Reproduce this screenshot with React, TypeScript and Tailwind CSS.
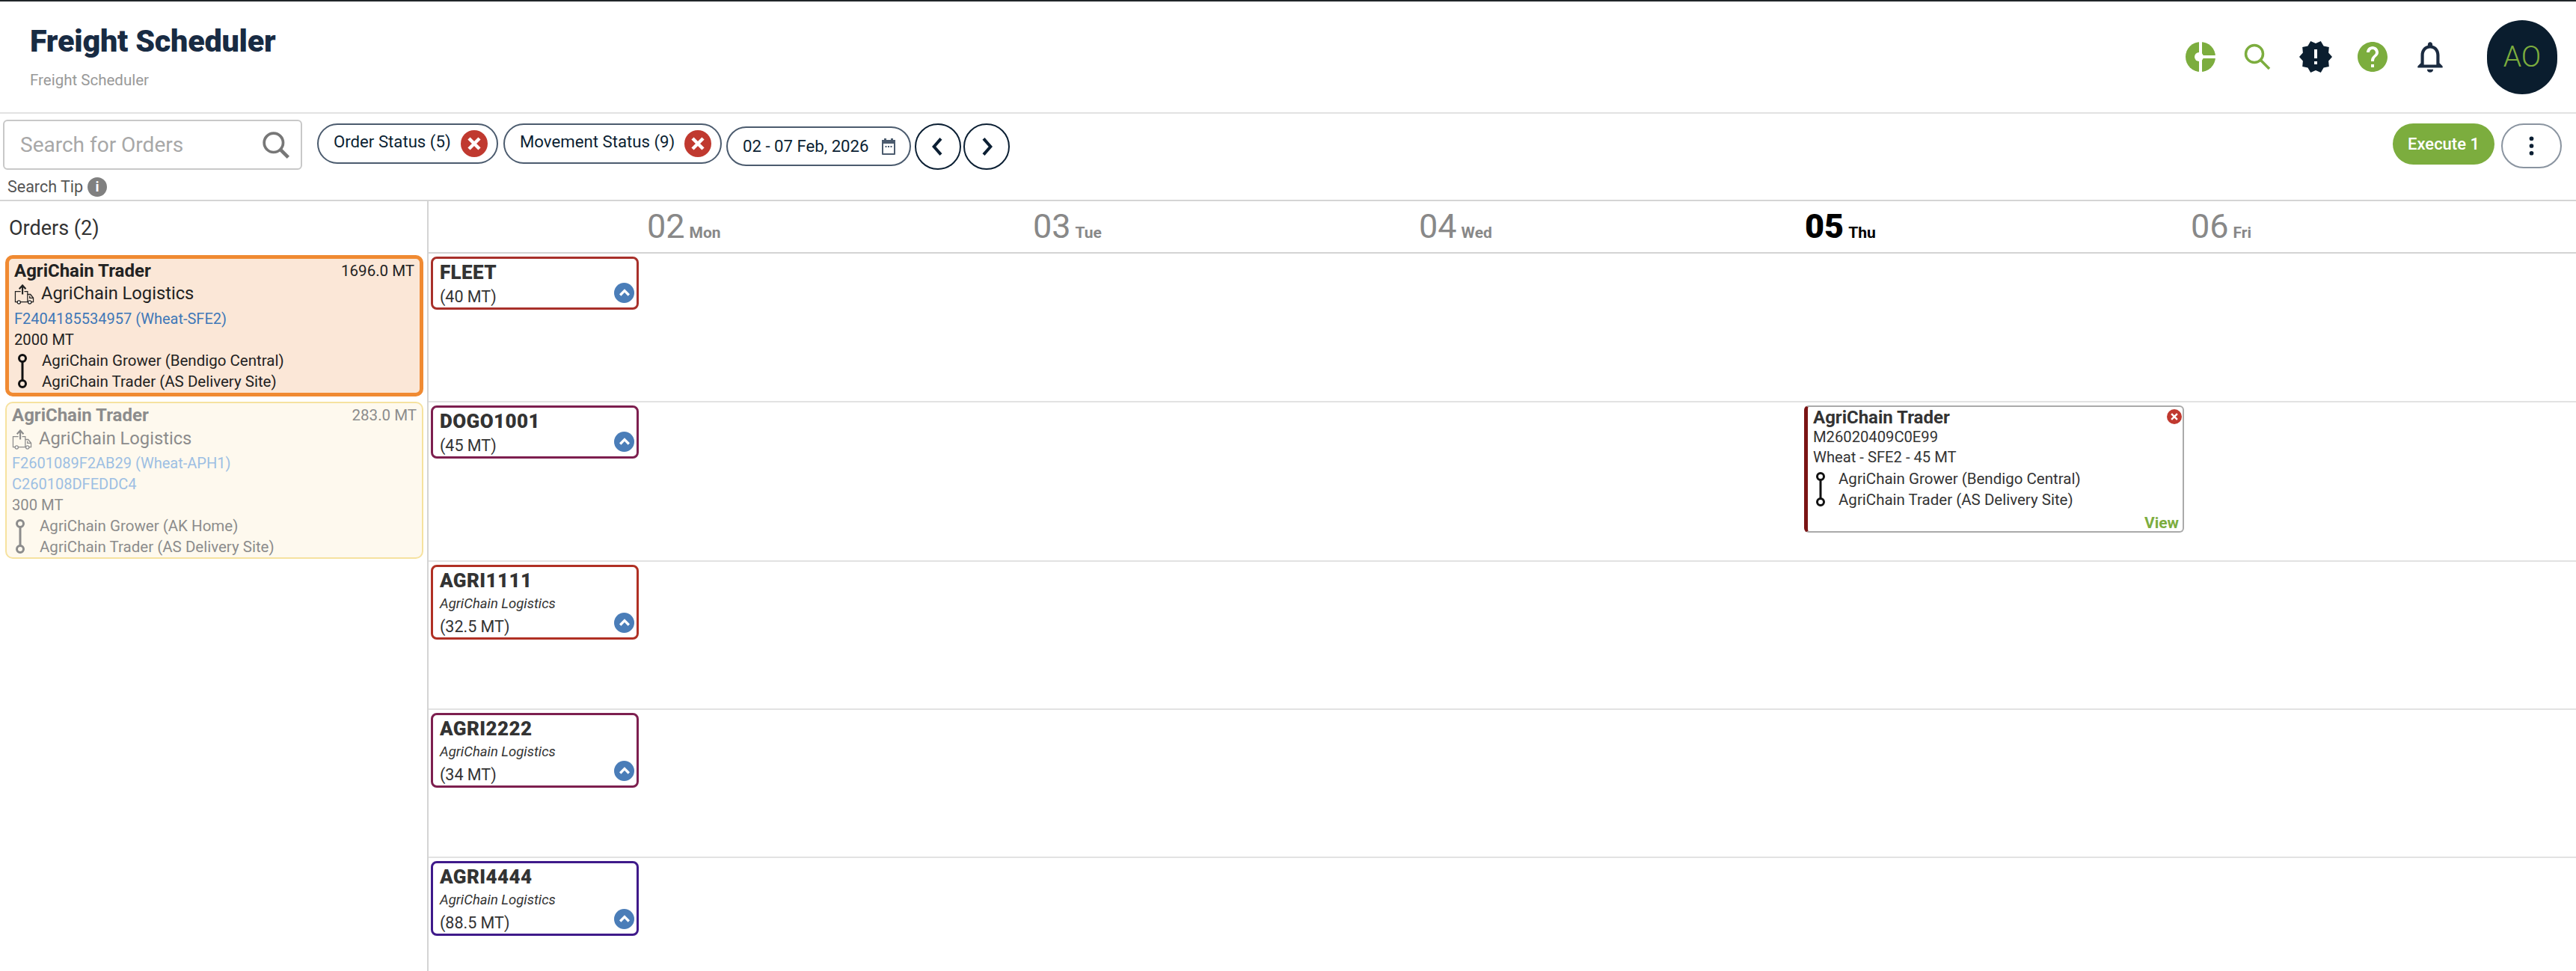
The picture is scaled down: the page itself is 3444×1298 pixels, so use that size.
import { MdHelp, MdNewReleases, MdOutlineNotifications } from 'react-icons/md'

const days = [
  { num: '02', name: 'Mon' },
  { num: '03', name: 'Tue' },
  { num: '04', name: 'Wed' },
  { num: '05', name: 'Thu', today: true },
  { num: '06', name: 'Fri' },
]

const CloseDot = ({ className }: { className: string }) => (
  <svg viewBox="0 0 36 36" className={className}>
    <circle cx="18" cy="18" r="18" fill="#c0392f" />
    <path d="M11 11l14 14M25 11L11 25" stroke="#fff" strokeWidth="4.500" />
  </svg>
)

const RouteIcon = ({ color, className }: { color: string; className: string }) => (
  <svg viewBox="0 0 14 48" className={className} fill="none" stroke={color}>
    <circle cx="7" cy="7" r="4.500" strokeWidth="3" />
    <path d="M7 12v24" strokeWidth="3" />
    <circle cx="7" cy="41" r="4.500" strokeWidth="3" />
  </svg>
)

const TruckIcon = ({ color }: { color: string }) => (
  <svg viewBox="0 0 28 28" className="h-[27px] w-[27px] shrink-0" fill="none" stroke={color} strokeWidth="1.300">
    <path d="M9 10H1.500v14.500h17V10H14" />
    <path d="M11.500 14V2M7 6.500l4.500-5 4.500 5" strokeWidth="2.200" />
    <path d="M18.500 14h4l4 5v5.500h-8" />
    <path d="M21.500 16v3h5" />
    <circle cx="6.500" cy="25" r="2.200" fill="#fff" />
    <circle cx="21.500" cy="25" r="2.200" fill="#fff" />
  </svg>
)

const Chip = ({ label, width }: { label: string; width: string }) => (
  <div className={`flex h-[54px] items-center justify-between rounded-[27px] border-2 border-[#4b5b6e] pr-[12px] pl-[20px] text-[22.200px] text-[#0b1f33] ${width}`}>
    <span className="-translate-y-[2px]">{label}</span>
    <CloseDot className="h-[36px] w-[36px]" />
  </div>
)

const RoundNav = ({ d }: { d: string }) => (
  <button className="flex h-[62px] w-[62px] items-center justify-center rounded-full border-2 border-[#0b1f33]">
    <svg viewBox="0 0 24 24" className="h-[32px] w-[32px]" fill="none" stroke="#0b1f33" strokeWidth="3">
      <path d={d} />
    </svg>
  </button>
)

function LabelCard({ name, company, weight, color }: { name: string; company?: string; weight: string; color: string }) {
  return (
    <div className={`relative mt-[4px] ml-[3px] w-[278px] rounded-[8px] border-[3px] pt-[3px] pl-[9px] text-[#333] ${color} ${company ? 'h-[100px]' : 'h-[71px]'}`}>
      <div className="text-[26px] leading-[30px] font-black tracking-[0.4px]">{name}</div>
      {company && <div className="text-[18.500px] leading-[32px] italic">{company}</div>}
      <div className={`text-[21.500px] ${company ? 'leading-[30px]' : 'leading-[36px]'}`}>{weight}</div>
      <div className="absolute right-[3px] bottom-[6px] flex h-[27px] w-[27px] items-center justify-center rounded-full bg-[#4a7db8]">
        <svg viewBox="0 0 24 24" className="h-[20px] w-[20px]" fill="none" stroke="#fff" strokeWidth="4">
          <path d="M5 15l7-7 7 7" />
        </svg>
      </div>
    </div>
  )
}

function OrderCard({ selected }: { selected?: boolean }) {
  const muted = !selected
  return (
    <div
      className={
        selected
          ? 'h-[189px] rounded-[10px] border-[5px] border-[#f08a32] bg-[#fbe7d7] pt-[2px] pr-[7px] pl-[7px] text-[#222]'
          : 'mt-[7px] h-[210px] rounded-[10px] border-2 border-[#f6e29f] bg-[#fef9ee] pt-[2px] pr-[7px] pl-[7px] text-[#8c8c8c]'
      }
    >
      <div className="flex h-[28px] items-center justify-between">
        <span className="text-[24px] font-bold">AgriChain Trader</span>
        <span className="text-[20.500px]">{selected ? '1696.0 MT' : '283.0 MT'}</span>
      </div>
      <div className={`flex h-[30px] items-center gap-[9px] text-[23.700px] ${selected ? 'mt-[2px]' : 'mt-[3px]'}`}>
        <TruckIcon color={muted ? '#8c8c8c' : '#222'} />
        AgriChain Logistics
      </div>
      <div className={`text-[20px] leading-[28px] ${muted ? 'mt-[3px] text-[#9dbfe3]' : 'mt-[4px] text-[#3f78b8]'}`}>
        {selected ? 'F2404185534957 (Wheat-SFE2)' : 'F2601089F2AB29 (Wheat-APH1)'}
      </div>
      {muted && <div className="text-[20px] leading-[28px] text-[#9dbfe3]">C260108DFEDDC4</div>}
      <div className="text-[20.200px] leading-[28px]">{selected ? '2000 MT' : '300 MT'}</div>
      <div className="flex items-center">
        <RouteIcon color={muted ? '#8c8c8c' : '#111'} className="ml-[4px] h-[48px] w-[14px]" />
        <div className="ml-[19px] text-[20.500px] leading-[28px]">
          <div>{selected ? 'AgriChain Grower (Bendigo Central)' : 'AgriChain Grower (AK Home)'}</div>
          <div>AgriChain Trader (AS Delivery Site)</div>
        </div>
      </div>
    </div>
  )
}

function MovementCard() {
  return (
    <div className="relative mt-[4px] -ml-[1px] h-[170px] w-[508px] rounded-[6px] border-2 border-l-[5px] border-[#aaa] border-l-[#7a1414] pt-[1px] pl-[7px] text-[#333]">
      <CloseDot className="absolute top-[3px] right-[1px] h-[20px] w-[20px]" />
      <div className="text-[24px] leading-[26px] font-bold">AgriChain Trader</div>
      <div className="text-[20.200px] leading-[26px]">M26020409C0E99</div>
      <div className="text-[20.200px] leading-[28px]">Wheat - SFE2 - 45 MT</div>
      <div className="mt-[1px] flex items-center">
        <RouteIcon color="#111" className="ml-[3px] h-[48px] w-[14px]" />
        <div className="ml-[17px] text-[20.500px] leading-[28px]">
          <div>AgriChain Grower (Bendigo Central)</div>
          <div>AgriChain Trader (AS Delivery Site)</div>
        </div>
      </div>
      <span className="absolute right-[5px] bottom-0 text-[21px] leading-[22px] font-bold text-[#7cad3e]">View</span>
    </div>
  )
}

function Row({ h, children, extra }: { h: string; children: React.ReactNode; extra?: React.ReactNode }) {
  return (
    <div className={`grid grid-cols-[292px_repeat(5,516px)] border-b-2 border-[#e2e2e2] ${h}`}>
      <div>{children}</div>
      <div />
      <div />
      <div />
      <div>{extra}</div>
      <div />
    </div>
  )
}

export default function App() {
  return (
    <div className="flex h-[1298px] w-[3444px] flex-col overflow-hidden bg-white font-['Roboto',sans-serif]">
      <div className="h-[2px] bg-[#212529]" />

      {/* page header */}
      <header className="flex h-[150px] items-center justify-between border-b-2 border-[#e2e2e2] pr-[25px] pl-[40px]">
        <div className="self-start pt-[26px]">
          <h1 className="text-[41.300px] leading-[54px] font-black tracking-[-0.2px] text-[#182b43]">Freight Scheduler</h1>
          <p className="mt-[11px] text-[20.500px] leading-[28px] text-[#999]">Freight Scheduler</p>
        </div>
        <div className="flex items-center">
          <svg viewBox="0 0 40 40" className="h-[40px] w-[40px]">
            <circle cx="20" cy="20" r="20" fill="#7cad3e" />
            <path d="M20 0v40M20 20h20" stroke="#fff" strokeWidth="4" />
            <circle cx="18" cy="20" r="6" fill="#fff" />
          </svg>
          <svg viewBox="0 0 36 36" className="ml-[38px] h-[36px] w-[36px]" fill="none" stroke="#7cad3e" strokeWidth="3.500">
            <circle cx="14" cy="14" r="11.500" />
            <path d="M22 22l12 12" />
          </svg>
          <MdNewReleases className="ml-[36px] h-[48px] w-[48px] text-[#0b1e2f]" />
          <MdHelp className="ml-[28px] h-[48px] w-[48px] text-[#7cad3e]" />
          <MdOutlineNotifications className="ml-[28px] h-[50px] w-[50px] text-[#1b2b40]" />
          <div className="ml-[51px] flex h-[99px] w-[94px] items-center justify-center rounded-full bg-[#0a1d2e] text-[39px] font-light text-[#7cad3e]">
            AO
          </div>
        </div>
      </header>

      {/* toolbar */}
      <div className="flex h-[117px] border-b-2 border-[#d4d4d4] pr-[19px]">
        <div className="w-[424px] pt-[8px] pl-[4px]">
          <div className="flex h-[67px] w-[400px] items-center justify-between rounded-[6px] border-2 border-[#c8c8c8] pr-[14px] pl-[21px] text-[28px] text-[#a8a8a8]">
            <span>Search for Orders</span>
            <svg viewBox="0 0 36 36" className="h-[38px] w-[38px]" fill="none" stroke="#777" strokeWidth="3.500">
              <circle cx="15" cy="15" r="12" />
              <path d="M23.500 23.500l10 10" strokeWidth="4.500" />
            </svg>
          </div>
          <div className="mt-[9px] flex items-center gap-[6px] pl-[6px] text-[21.500px] leading-[28px] text-[#555]">
            Search Tip
            <div className="flex h-[26px] w-[26px] items-center justify-center rounded-full bg-[#808080] text-[19px] font-bold text-white">i</div>
          </div>
        </div>
        <div className="flex h-[62px] items-start gap-[7px] pt-[13px]">
          <Chip label="Order Status (5)" width="w-[242px]" />
          <Chip label="Movement Status (9)" width="w-[292px]" />
          <div className="mt-[4px] -ml-[1px] flex h-[53px] w-[247px] items-center justify-between rounded-[27px] border-2 border-[#4b5b6e] pr-[16px] pl-[20px] text-[22.200px] text-[#0b1f33]">
            02 - 07 Feb, 2026
            <svg viewBox="0 0 24 24" className="h-[26px] w-[24px]" fill="#4b5b6e">
              <path d="M6 1h3v2h6V1h3v2h3v19a1 1 0 0 1-1 1H4a1 1 0 0 1-1-1V3h3z" />
              <rect x="5" y="8" width="14" height="13" fill="#fff" />
              <rect x="7.500" y="11" width="2" height="2" />
              <rect x="11" y="11" width="2" height="2" />
              <rect x="14.500" y="11" width="2" height="2" />
            </svg>
          </div>
          <div className="-ml-[2px] flex gap-[3px]">
            <RoundNav d="M15 4l-7 8 7 8" />
            <RoundNav d="M9 4l7 8-7 8" />
          </div>
        </div>
        <div className="ml-auto flex items-start gap-[9px] pt-[13px]">
          <button className="h-[55px] w-[136px] rounded-[28px] bg-[#7cad3e] text-[22px] font-medium text-white">Execute 1</button>
          <button className="flex h-[60px] w-[81px] items-center justify-center rounded-[30px] border-2 border-[#8a94a0]">
            <svg viewBox="0 0 8 32" className="h-[26px] w-[7px]" fill="#0b1f33">
              <circle cx="4" cy="4" r="3.500" />
              <circle cx="4" cy="16" r="3.500" />
              <circle cx="4" cy="28" r="3.500" />
            </svg>
          </button>
        </div>
      </div>

      <div className="flex min-h-0 flex-1">
        {/* orders list */}
        <aside className="w-[573px] shrink-0 border-r-2 border-[#d4d4d4] pr-[5px] pl-[7px]">
          <div className="flex h-[72px] items-center pl-[5px] text-[27px] text-[#333]">Orders (2)</div>
          <OrderCard selected />
          <OrderCard />
        </aside>

        {/* schedule */}
        <main className="min-w-0 flex-1">
          <div className="grid h-[70px] grid-cols-[292px_repeat(5,516px)] border-b-2 border-[#d4d4d4]">
            <div />
            {days.map((d) => (
              <div key={d.num} className={`flex items-baseline gap-[6px] pt-[8px] ${d.today ? 'text-black' : 'text-[#888]'}`}>
                <span className={`text-[45px] leading-[52px] ${d.today ? 'font-black' : ''}`}>{d.num}</span>
                <span className="text-[21px] font-bold">{d.name}</span>
              </div>
            ))}
          </div>
          <Row h="h-[199px]">
            <LabelCard name="FLEET" weight="(40 MT)" color="border-[#a8302a]" />
          </Row>
          <Row h="h-[213px]" extra={<MovementCard />}>
            <LabelCard name="DOGO1001" weight="(45 MT)" color="border-[#7d1f4f]" />
          </Row>
          <Row h="h-[198px]">
            <LabelCard name="AGRI1111" company="AgriChain Logistics" weight="(32.5 MT)" color="border-[#b03024]" />
          </Row>
          <Row h="h-[198px]">
            <LabelCard name="AGRI2222" company="AgriChain Logistics" weight="(34 MT)" color="border-[#7d1f4f]" />
          </Row>
          <Row h="h-[198px]">
            <LabelCard name="AGRI4444" company="AgriChain Logistics" weight="(88.5 MT)" color="border-[#3f1a8a]" />
          </Row>
        </main>
      </div>
    </div>
  )
}
